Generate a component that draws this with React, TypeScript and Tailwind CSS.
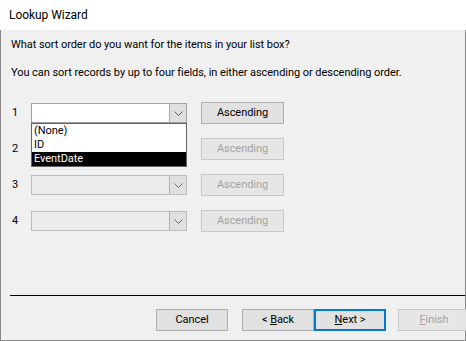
import React from "react"

const font = { fontFamily: 'Roboto, "Segoe UI", sans-serif' }

function Chevron({ color = "#5a5a5a" }: { color?: string }) {
  return (
    <svg width="9" height="5" viewBox="0 0 9 5">
      <path d="M0.5 0.5 L4.5 4.5 L8.5 0.5" fill="none" stroke={color} strokeWidth="1" />
    </svg>
  )
}

function Combo({ enabled }: { enabled: boolean }) {
  return (
    <div
      className={
        "flex h-[20px] w-[156px] shrink-0 border " +
        (enabled ? "border-[#a0a0a0] bg-white" : "border-[#bcbcbc] bg-[#ececec]")
      }
    >
      <div className="flex-1" />
      <div className="flex w-[17px] items-center justify-center border-l border-[#b0b0b0] bg-[#e0e0e0]">
        <Chevron color={enabled ? "#5a5a5a" : "#6d6d6d"} />
      </div>
    </div>
  )
}

function SortButton({ enabled }: { enabled: boolean }) {
  return (
    <div
      className={
        "ml-[14px] flex h-[22px] w-[83px] shrink-0 items-center justify-center border " +
        (enabled
          ? "border-[#adadad] bg-[#e1e1e1] text-black"
          : "border-[#c8c8c8] bg-[#e6e6e6] text-[#a3a3a3]")
      }
    >
      Ascending
    </div>
  )
}

function Row({ n, enabled }: { n: number; enabled: boolean }) {
  return (
    <div className="flex h-[22px] items-center">
      <span className="w-[19px] shrink-0 text-black">{n}</span>
      <Combo enabled={enabled} />
      <SortButton enabled={enabled} />
    </div>
  )
}

function WizButton({
  children,
  primary,
  disabled,
  className = "",
}: {
  children: React.ReactNode
  primary?: boolean
  disabled?: boolean
  className?: string
}) {
  return (
    <div
      className={
        "flex h-[22px] w-[72px] shrink-0 items-center justify-center " +
        (primary
          ? "border-2 border-[#0078d7] bg-[#e1e1e1] text-black "
          : disabled
            ? "border border-[#c8c8c8] bg-[#e6e6e6] text-[#a3a3a3] "
            : "border border-[#adadad] bg-[#e1e1e1] text-black ") +
        className
      }
    >
      <span className="whitespace-pre">{children}</span>
    </div>
  )
}

export default function App() {
  return (
    <div
      className="flex h-[341px] w-[466px] flex-col overflow-hidden bg-white text-[11px] leading-[14px] tracking-[-0.05px]"
      style={font}
    >
      {/* title bar */}
      <div className="flex h-[30px] shrink-0 items-center pl-[9px] text-[12px] text-black">
        Lookup Wizard
      </div>

      {/* body */}
      <div className="flex flex-1 flex-col border-x border-b border-[#8a8a8a] bg-[#f0f0f0]">
        <div className="pl-[10px] pt-[7px] leading-[16px] text-black">
          <p>What sort order do you want for the items in your list box?</p>
          <p className="mt-[12px]">You can sort records by up to four fields, in either ascending or descending order.</p>
        </div>

        <div className="relative mt-[21px] flex flex-col gap-[14px] pl-[11px]">
          <Row n={1} enabled />
          <Row n={2} enabled={false} />
          <Row n={3} enabled={false} />
          <Row n={4} enabled={false} />

          {/* open list of combo 1 */}
          <div className="absolute left-[30px] top-[21px] w-[156px] border border-[#646464] bg-white text-black">
            <div className="h-[14px] pl-[2px] leading-[14px]">(None)</div>
            <div className="h-[14px] pl-[2px] leading-[14px]">ID</div>
            <div className="h-[14px] bg-black pl-[2px] leading-[14px] text-white">EventDate</div>
          </div>
        </div>

        <div className="mt-auto">
          <div className="ml-[9px] h-px bg-black" />
          <div className="mb-[9px] mt-[13px] flex">
            <WizButton className="ml-[155px]">Cancel</WizButton>
            <WizButton className="ml-[14px]">
              {"< "}
              <span className="underline">B</span>ack
            </WizButton>
            <WizButton primary>
              <span className="underline">N</span>
              {"ext >"}
            </WizButton>
            <WizButton disabled className="ml-[12px]">
              <span className="underline">F</span>inish
            </WizButton>
          </div>
        </div>
      </div>
    </div>
  )
}
